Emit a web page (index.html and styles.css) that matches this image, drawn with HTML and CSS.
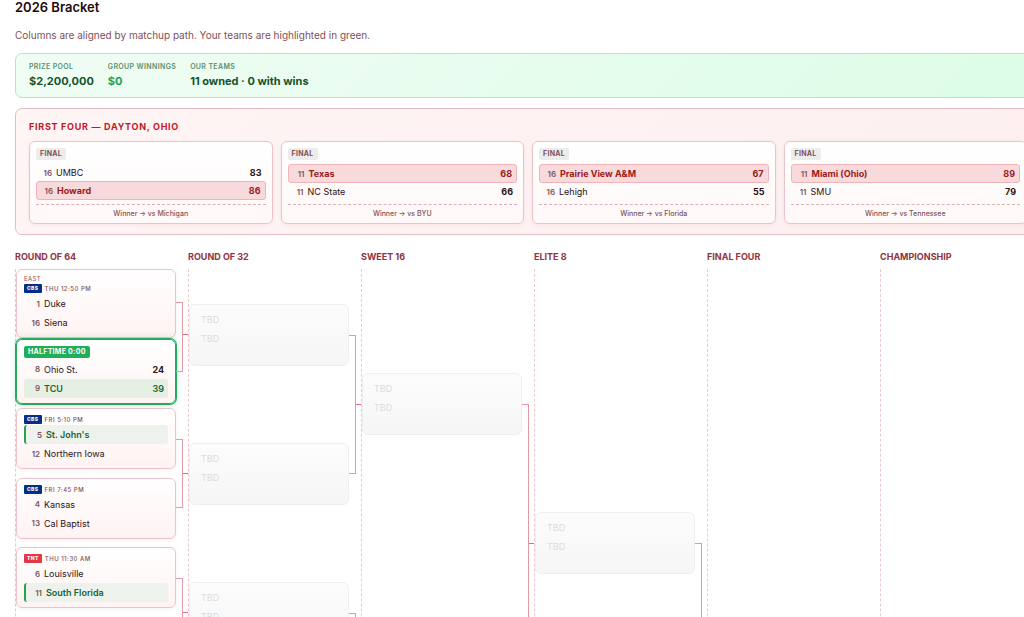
FILE: index.html
```html
<!DOCTYPE html>
<html lang="en">
<head>
    <meta charset="UTF-8">
    <meta name="viewport" content="width=device-width, initial-scale=1.0">
    <title>2026 Bracket</title>
    <link rel="stylesheet" href="styles.css">
</head>
<body>
    <main class="page">
        <h1>2026 Bracket</h1>
        <p class="intro">Columns are aligned by matchup path. Your teams are highlighted in green.</p>

        <div class="board">
            <!-- Pool summary -->
            <dl class="summary">
                <div><dt>Prize Pool</dt><dd>$2,200,000</dd></div>
                <div><dt>Group Winnings</dt><dd class="winnings">$0</dd></div>
                <div><dt>Our Teams</dt><dd>11 owned · 0 with wins</dd></div>
            </dl>

            <!-- First Four -->
            <section class="first-four">
                <h2>First Four — Dayton, Ohio</h2>
                <div class="first-four-grid">
                    <article class="card playin">
                        <span class="badge final">Final</span>
                        <div class="team"><span class="seed">16</span><span class="name">UMBC</span><span class="score">83</span></div>
                        <div class="team winner"><span class="seed">16</span><span class="name">Howard</span><span class="score">86</span></div>
                        <p class="next">Winner → vs Michigan</p>
                    </article>
                    <article class="card playin">
                        <span class="badge final">Final</span>
                        <div class="team winner"><span class="seed">11</span><span class="name">Texas</span><span class="score">68</span></div>
                        <div class="team"><span class="seed">11</span><span class="name">NC State</span><span class="score">66</span></div>
                        <p class="next">Winner → vs BYU</p>
                    </article>
                    <article class="card playin">
                        <span class="badge final">Final</span>
                        <div class="team winner"><span class="seed">16</span><span class="name">Prairie View A&amp;M</span><span class="score">67</span></div>
                        <div class="team"><span class="seed">16</span><span class="name">Lehigh</span><span class="score">55</span></div>
                        <p class="next">Winner → vs Florida</p>
                    </article>
                    <article class="card playin">
                        <span class="badge final">Final</span>
                        <div class="team winner"><span class="seed">11</span><span class="name">Miami (Ohio)</span><span class="score">89</span></div>
                        <div class="team"><span class="seed">11</span><span class="name">SMU</span><span class="score">79</span></div>
                        <p class="next">Winner → vs Tennessee</p>
                    </article>
                </div>
            </section>

            <!-- Bracket -->
            <div class="bracket">
                <section class="round round-64">
                    <h3>Round of 64</h3>
                    <div class="matches">
                        <div class="pair pair-tall">
                            <div class="slots">
                                <div class="slot">
                                    <article class="card">
                                        <div class="region">East</div>
                                        <div class="meta"><span class="network cbs">CBS</span><time>Thu 12:50 PM</time></div>
                                        <div class="team"><span class="seed">1</span><span class="name">Duke</span></div>
                                        <div class="team"><span class="seed">16</span><span class="name">Siena</span></div>
                                    </article>
                                </div>
                                <div class="slot">
                                    <article class="card live">
                                        <span class="badge halftime">Halftime 0:00</span>
                                        <div class="team"><span class="seed">8</span><span class="name">Ohio St.</span><span class="score">24</span></div>
                                        <div class="team leading"><span class="seed">9</span><span class="name">TCU</span><span class="score">39</span></div>
                                    </article>
                                </div>
                            </div>
                            <div class="joint"><span class="fork"></span><span class="stem"></span></div>
                        </div>
                        <div class="pair">
                            <div class="slots">
                                <div class="slot">
                                    <article class="card">
                                        <div class="meta"><span class="network cbs">CBS</span><time>Fri 5:10 PM</time></div>
                                        <div class="team owned"><span class="seed">5</span><span class="name">St. John's</span></div>
                                        <div class="team"><span class="seed">12</span><span class="name">Northern Iowa</span></div>
                                    </article>
                                </div>
                                <div class="slot">
                                    <article class="card">
                                        <div class="meta"><span class="network cbs">CBS</span><time>Fri 7:45 PM</time></div>
                                        <div class="team"><span class="seed">4</span><span class="name">Kansas</span></div>
                                        <div class="team"><span class="seed">13</span><span class="name">Cal Baptist</span></div>
                                    </article>
                                </div>
                            </div>
                            <div class="joint"><span class="fork"></span><span class="stem"></span></div>
                        </div>
                        <div class="pair">
                            <div class="slots">
                                <div class="slot">
                                    <article class="card">
                                        <div class="meta"><span class="network tnt">TNT</span><time>Thu 11:30 AM</time></div>
                                        <div class="team"><span class="seed">6</span><span class="name">Louisville</span></div>
                                        <div class="team owned"><span class="seed">11</span><span class="name">South Florida</span></div>
                                    </article>
                                </div>
                                <div class="slot"></div>
                            </div>
                            <div class="joint"><span class="fork"></span><span class="stem"></span></div>
                        </div>
                    </div>
                </section>

                <section class="round round-32">
                    <h3>Round of 32</h3>
                    <div class="matches">
                        <div class="pair">
                            <div class="slots">
                                <div class="slot"><article class="card tbd"><div class="team">TBD</div><div class="team">TBD</div></article></div>
                                <div class="slot"><article class="card tbd"><div class="team">TBD</div><div class="team">TBD</div></article></div>
                            </div>
                            <div class="joint"><span class="fork"></span><span class="stem"></span></div>
                        </div>
                        <div class="pair">
                            <div class="slots">
                                <div class="slot"><article class="card tbd"><div class="team">TBD</div><div class="team">TBD</div></article></div>
                                <div class="slot"></div>
                            </div>
                            <div class="joint"><span class="fork"></span><span class="stem"></span></div>
                        </div>
                    </div>
                </section>

                <section class="round round-16">
                    <h3>Sweet 16</h3>
                    <div class="matches">
                        <div class="pair">
                            <div class="slots">
                                <div class="slot"><article class="card tbd"><div class="team">TBD</div><div class="team">TBD</div></article></div>
                                <div class="slot"></div>
                            </div>
                            <div class="joint"><span class="fork"></span><span class="stem"></span></div>
                        </div>
                    </div>
                </section>

                <section class="round round-8">
                    <h3>Elite 8</h3>
                    <div class="matches">
                        <div class="pair">
                            <div class="slots">
                                <div class="slot"><article class="card tbd"><div class="team">TBD</div><div class="team">TBD</div></article></div>
                                <div class="slot"></div>
                            </div>
                            <div class="joint"><span class="fork"></span><span class="stem"></span></div>
                        </div>
                    </div>
                </section>

                <section class="round">
                    <h3>Final Four</h3>
                    <div class="matches"></div>
                </section>

                <section class="round">
                    <h3>Championship</h3>
                    <div class="matches"></div>
                </section>
            </div>
        </div>
    </main>
</body>
</html>
```
FILE: styles.css
```css
* {
    box-sizing: border-box;
}
body {
    font-family: Inter, 'Liberation Sans', sans-serif;
    font-size: 9px;
    color: #2a1215;
    margin: 0;
    background-color: #fff;
}
h1, h2, h3, p, dl, dd {
    margin: 0;
}
.page {
    height: 100vh;
    overflow: hidden;
    padding-left: 15px;
}
h1 {
    font-size: 13px;
    line-height: 14px;
    font-weight: 600;
    color: #1f0a0d;
}
.intro {
    margin: 12px 0 9px;
    font-size: 10px;
    line-height: 18px;
    color: #7f5058;
}
.board {
    min-width: 1026px;
}

/* Pool summary */
.summary {
    display: flex;
    gap: 14px;
    padding: 8px 13px;
    border: 1px solid #b9e3c8;
    border-radius: 7px;
    background: linear-gradient(135deg, #f0fdf4, #dcfce7);
}
.summary dt {
    font-size: 7px;
    line-height: 10px;
    font-weight: 600;
    letter-spacing: 0.05em;
    text-transform: uppercase;
    color: #5b9070;
}
.summary dd {
    margin-top: 2px;
    font-size: 11px;
    line-height: 15px;
    font-weight: 700;
    color: #14532d;
}
.summary .winnings {
    color: #16a34a;
}

/* Cards shared by the play-in games and the bracket */
.card {
    border: 1px solid #ebc4c9;
    border-radius: 6px;
    background: linear-gradient(#fff, #fff3f3);
    box-shadow: 0 1px 4px rgba(127, 29, 29, 0.07);
}
.team {
    display: flex;
    align-items: center;
    gap: 4px;
    padding: 0 4px;
    border-radius: 3px;
}
.seed {
    width: 12px;
    font-size: 8px;
    font-weight: 600;
    text-align: right;
    color: #80525a;
}
.name {
    font-size: 9px;
}
.score {
    margin-left: auto;
    font-size: 9px;
    font-weight: 700;
}
.badge {
    display: block;
    width: fit-content;
    padding: 0 4px;
    border-radius: 2px;
    font-size: 7px;
    line-height: 12px;
    font-weight: 700;
    letter-spacing: 0.04em;
    text-transform: uppercase;
}

/* First Four */
.first-four {
    margin-top: 10px;
    padding: 11px 13px 10px;
    border: 1px solid #e5bcc2;
    border-radius: 7px;
    background: linear-gradient(135deg, #fff5f5, #fdefef);
}
.first-four h2 {
    font-size: 9px;
    line-height: 13px;
    font-weight: 700;
    letter-spacing: 0.08em;
    text-transform: uppercase;
    color: #c4161f;
}
.first-four-grid {
    display: grid;
    grid-template-columns: repeat(4, 1fr);
    gap: 8px;
    margin-top: 8px;
}
.playin {
    padding: 6px 6px 4px;
    background: linear-gradient(#fff, #fff8f8);
}
.final {
    margin-bottom: 4px;
    background-color: #ececec;
    color: #80525a;
}
.playin .team {
    height: 17px;
}
.playin .winner {
    height: 19px;
    border: 1px solid #efb3b8;
    background-color: #f8dadc;
}
.winner .name,
.winner .score {
    font-weight: 700;
    color: #991b1b;
}
.next {
    margin-top: 4px;
    padding-top: 3px;
    border-top: 1px dashed #dcb0b5;
    font-size: 7px;
    line-height: 11px;
    font-weight: 500;
    text-align: center;
    color: #80525a;
}

/* Bracket */
.bracket {
    display: grid;
    grid-template-columns: repeat(6, 1fr);
    margin-top: 15px;
    margin-right: -12px;
}
.round h3 {
    margin-bottom: 5px;
    font-size: 9px;
    line-height: 14px;
    font-weight: 700;
    text-transform: uppercase;
    color: #8f3340;
}
.matches {
    height: 100vh;
    border-left: 1px dashed #edc8cc;
}
.pair {
    display: flex;
    height: 139px;
}
.round-32 .pair {
    height: 278px;
}
.round-16 .pair {
    height: 556px;
}
.round-8 .pair {
    height: 1112px;
}
.slots {
    flex: 1;
    display: flex;
    flex-direction: column;
}
.slot {
    flex: 1 1 0;
    min-height: 0;
    display: flex;
    align-items: safe center;
    padding-bottom: 8px;
}
.slot .card {
    flex: 1;
    padding: 5px 7px;
}
.slot .team {
    height: 19px;
}
.region {
    font-size: 6px;
    line-height: 8px;
    letter-spacing: 0.06em;
    text-transform: uppercase;
    color: #a04550;
}
.meta {
    display: flex;
    align-items: center;
    gap: 3px;
    height: 11px;
}
.meta time {
    font-size: 6px;
    font-weight: 500;
    letter-spacing: 0.08em;
    text-transform: uppercase;
    color: #80525a;
}
.network {
    padding: 0 3px;
    border-radius: 1px;
    font-size: 5px;
    line-height: 9px;
    font-weight: 800;
    letter-spacing: 0.08em;
    color: #fff;
}
.cbs {
    background-color: #033087;
}
.tnt {
    background-color: #e13a46;
}
.slot .live {
    padding: 6px 7px 5px;
    border-color: #22ac5c;
    box-shadow: 0 0 0 1px #22ac5c, 0 0 8px rgba(34, 172, 92, 0.25);
}
.halftime {
    margin-bottom: 2px;
    background-color: #1fae5a;
    color: #fff;
}
.leading {
    background-color: #e6efe4;
}
.owned {
    border-left: 2px solid #22a352;
    background-color: #edf3ec;
}
.leading .name,
.leading .score,
.owned .name {
    font-weight: 600;
    color: #166534;
}
.slot .tbd {
    height: 62px;
    border-color: #efefef;
    background: linear-gradient(#fcfcfc, #f6f6f6);
    box-shadow: none;
    color: #dcdcdc;
}

/* Lines from each pair of games to the next round */
.joint {
    display: flex;
    align-items: center;
    width: 12px;
    padding-bottom: 8px;
}
.fork {
    width: 7px;
    height: calc(50% + 4px);
    border: 1px solid #e39aa0;
    border-left: 0;
}
.pair-tall .fork {
    margin-top: 5px;
}
.stem {
    width: 5px;
    height: 1px;
    background-color: #d9717a;
}
```
